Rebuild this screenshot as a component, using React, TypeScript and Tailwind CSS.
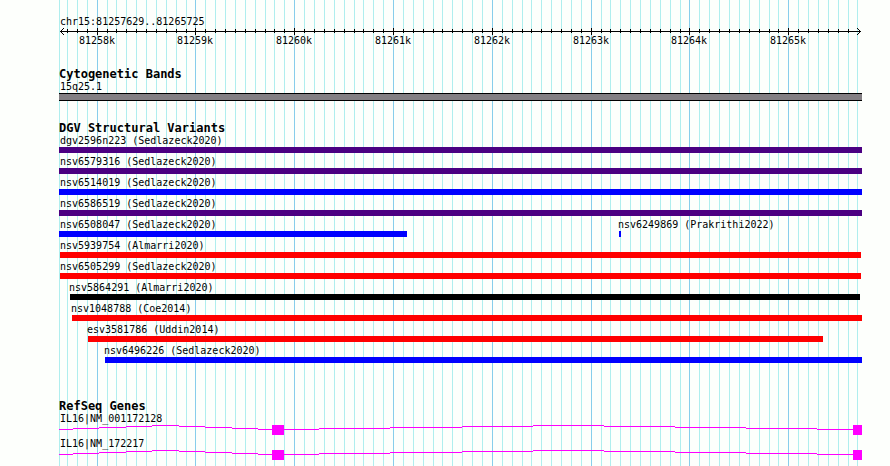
import React from 'react';

// every position is counted in plot units from the left edge of the plot
const PLOT_WIDTH = 803;
const FIRST_MAJOR = 38.15;
const MINOR_STEP = 9.8804;

const pct = (x: number) => `${(x / PLOT_WIDTH) * 100}%`;

const gridLines = [
	{ x: 0, major: false },
	...Array.from({ length: 81 }, (_, i) => ({
		x: Math.floor(FIRST_MAJOR + (i - 3) * MINOR_STEP),
		major: (i - 3) % 10 === 0,
	})),
];

// the outermost grid lines carry no tick, the arrowheads sit there
const ticks = gridLines.slice(1, -1);

const tickLabels = gridLines
	.filter((line) => line.major)
	.map((line, i) => ({ x: line.x, text: `${81258 + i}k` }));

interface IVariant {
	name: string;
	start: number;
	end: number;
	color: string;
}

const variantRows: IVariant[][] = [
	[{ name: 'dgv2596n223 (Sedlazeck2020)', start: 0, end: 803, color: 'bg-[#4b0082]' }],
	[{ name: 'nsv6579316 (Sedlazeck2020)', start: 0, end: 803, color: 'bg-[#4b0082]' }],
	[{ name: 'nsv6514019 (Sedlazeck2020)', start: 0, end: 803, color: 'bg-[#0000ff]' }],
	[{ name: 'nsv6586519 (Sedlazeck2020)', start: 0, end: 803, color: 'bg-[#4b0082]' }],
	[
		{ name: 'nsv6508047 (Sedlazeck2020)', start: 0, end: 348, color: 'bg-[#0000ff]' },
		{ name: 'nsv6249869 (Prakrithi2022)', start: 560, end: 562, color: 'bg-[#0000ff]' },
	],
	[{ name: 'nsv5939754 (Almarri2020)', start: 1, end: 802, color: 'bg-[#ff0000]' }],
	[{ name: 'nsv6505299 (Sedlazeck2020)', start: 1, end: 802, color: 'bg-[#ff0000]' }],
	[{ name: 'nsv5864291 (Almarri2020)', start: 11, end: 801, color: 'bg-black' }],
	[{ name: 'nsv1048788 (Coe2014)', start: 13, end: 803, color: 'bg-[#ff0000]' }],
	[{ name: 'esv3581786 (Uddin2014)', start: 29, end: 764, color: 'bg-[#ff0000]' }],
	[{ name: 'nsv6496226 (Sedlazeck2020)', start: 46, end: 803, color: 'bg-[#0000ff]' }],
];

const genes = ['IL16|NM_001172128', 'IL16|NM_172217'];

const Grid = () => (
	<svg
		className="absolute inset-0 h-full w-full"
		shapeRendering="crispEdges"
		aria-hidden="true"
	>
		{gridLines.map((line) => (
			<rect
				key={line.x}
				x={pct(line.x)}
				width="1"
				height="100%"
				fill={line.major ? '#87ceeb' : '#afeeee'}
			/>
		))}
	</svg>
);

const Ruler = () => (
	<header className="pt-[15px]">
		<h1 className="h-3 pl-px leading-[14px]">chr15:81257629..81265725</h1>
		<div className="relative h-2">
			<svg
				className="absolute inset-0 h-full w-full"
				shapeRendering="crispEdges"
				aria-hidden="true"
			>
				<rect x={pct(1)} y="4" width={pct(801)} height="1" />
				{ticks.map((line) => (
					<rect
						key={line.x}
						x={pct(line.x)}
						y={line.major ? 1 : 2}
						width="1"
						height={line.major ? 7 : 4}
					/>
				))}
			</svg>
			<svg
				className="absolute left-px top-px h-[7px] w-1"
				viewBox="0 0 4 7"
				shapeRendering="crispEdges"
				aria-hidden="true"
			>
				<path d="M3 0h1v1h-1zM2 1h1v1h-1zM1 2h1v1h-1zM0 3h1v1h-1zM1 4h1v1h-1zM2 5h1v1h-1zM3 6h1v1h-1z" />
			</svg>
			<svg
				className="absolute right-px top-px h-[7px] w-1"
				viewBox="0 0 4 7"
				shapeRendering="crispEdges"
				aria-hidden="true"
			>
				<path d="M0 0h1v1h-1zM1 1h1v1h-1zM2 2h1v1h-1zM3 3h1v1h-1zM2 4h1v1h-1zM1 5h1v1h-1zM0 6h1v1h-1z" />
			</svg>
		</div>
		<div className="relative h-3">
			{tickLabels.map((tick) => (
				<span
					key={tick.text}
					className="absolute -translate-x-1/2 leading-3"
					style={{ left: pct(tick.x) }}
				>
					{tick.text}
				</span>
			))}
		</div>
	</header>
);

const TrackTitle = ({ children }: { children: React.ReactNode }) => (
	<h2 className="h-3 text-xs font-bold leading-4">{children}</h2>
);

const VariantRow = ({ variants }: { variants: IVariant[] }) => (
	<li className="grid">
		{variants.map((variant) => (
			<div key={variant.name} className="col-start-1 row-start-1">
				<p
					className="h-[15px] leading-[18px]"
					style={{ marginLeft: pct(Math.max(1, variant.start - 1)) }}
				>
					{variant.name}
				</p>
				<div
					className={`h-1.5 ${variant.color}`}
					style={{
						marginLeft: pct(variant.start),
						width: pct(variant.end - variant.start),
					}}
				/>
			</div>
		))}
	</li>
);

const GeneRow = ({ name }: { name: string }) => (
	<li>
		<p className="h-[15px] pl-px leading-[18px]">{name}</p>
		<svg
			className="block h-2.5 w-full"
			viewBox="0 0 803 10"
			preserveAspectRatio="none"
			shapeRendering="crispEdges"
			fill="#ff00ff"
			aria-hidden="true"
		>
			<path
				d="M0 4.5H14M14 3.5H40M40 2.5H67M67 1.5H93M93 .5H120M120 1.5H146M146 2.5H173M173 3.5H199M199 4.5H213M225 4.5H260M260 3.5H331M331 2.5H403M403 1.5H474M474 .5H545M545 1.5H616M616 2.5H687M687 3.5H758M758 4.5H794"
				stroke="#ff00ff"
			/>
			<rect x="213" width="12" height="10" />
			<rect x="794" width="9" height="10" />
		</svg>
	</li>
);

const App = () => {
	return (
		<main className="min-h-screen bg-[#fdfffc] pl-[59px] pr-7 font-['DejaVu_Sans_Mono',monospace] text-[10px] text-black">
			<div className="relative min-h-screen">
				<Grid />
				<div className="relative whitespace-nowrap">
					<Ruler />
					<section className="pt-[19px]">
						<TrackTitle>Cytogenetic Bands</TrackTitle>
						<p className="h-[15px] pl-px leading-[18px]">15q25.1</p>
						<div className="h-2 border-y border-black bg-[#837f83]" />
					</section>
					<section className="pt-[19px]">
						<TrackTitle>DGV Structural Variants</TrackTitle>
						<ul>
							{variantRows.map((variants) => (
								<VariantRow key={variants[0].name} variants={variants} />
							))}
						</ul>
					</section>
					<section className="pt-[35px]">
						<TrackTitle>RefSeq Genes</TrackTitle>
						<ul>
							{genes.map((name) => (
								<GeneRow key={name} name={name} />
							))}
						</ul>
					</section>
				</div>
			</div>
		</main>
	);
};

export default App;
